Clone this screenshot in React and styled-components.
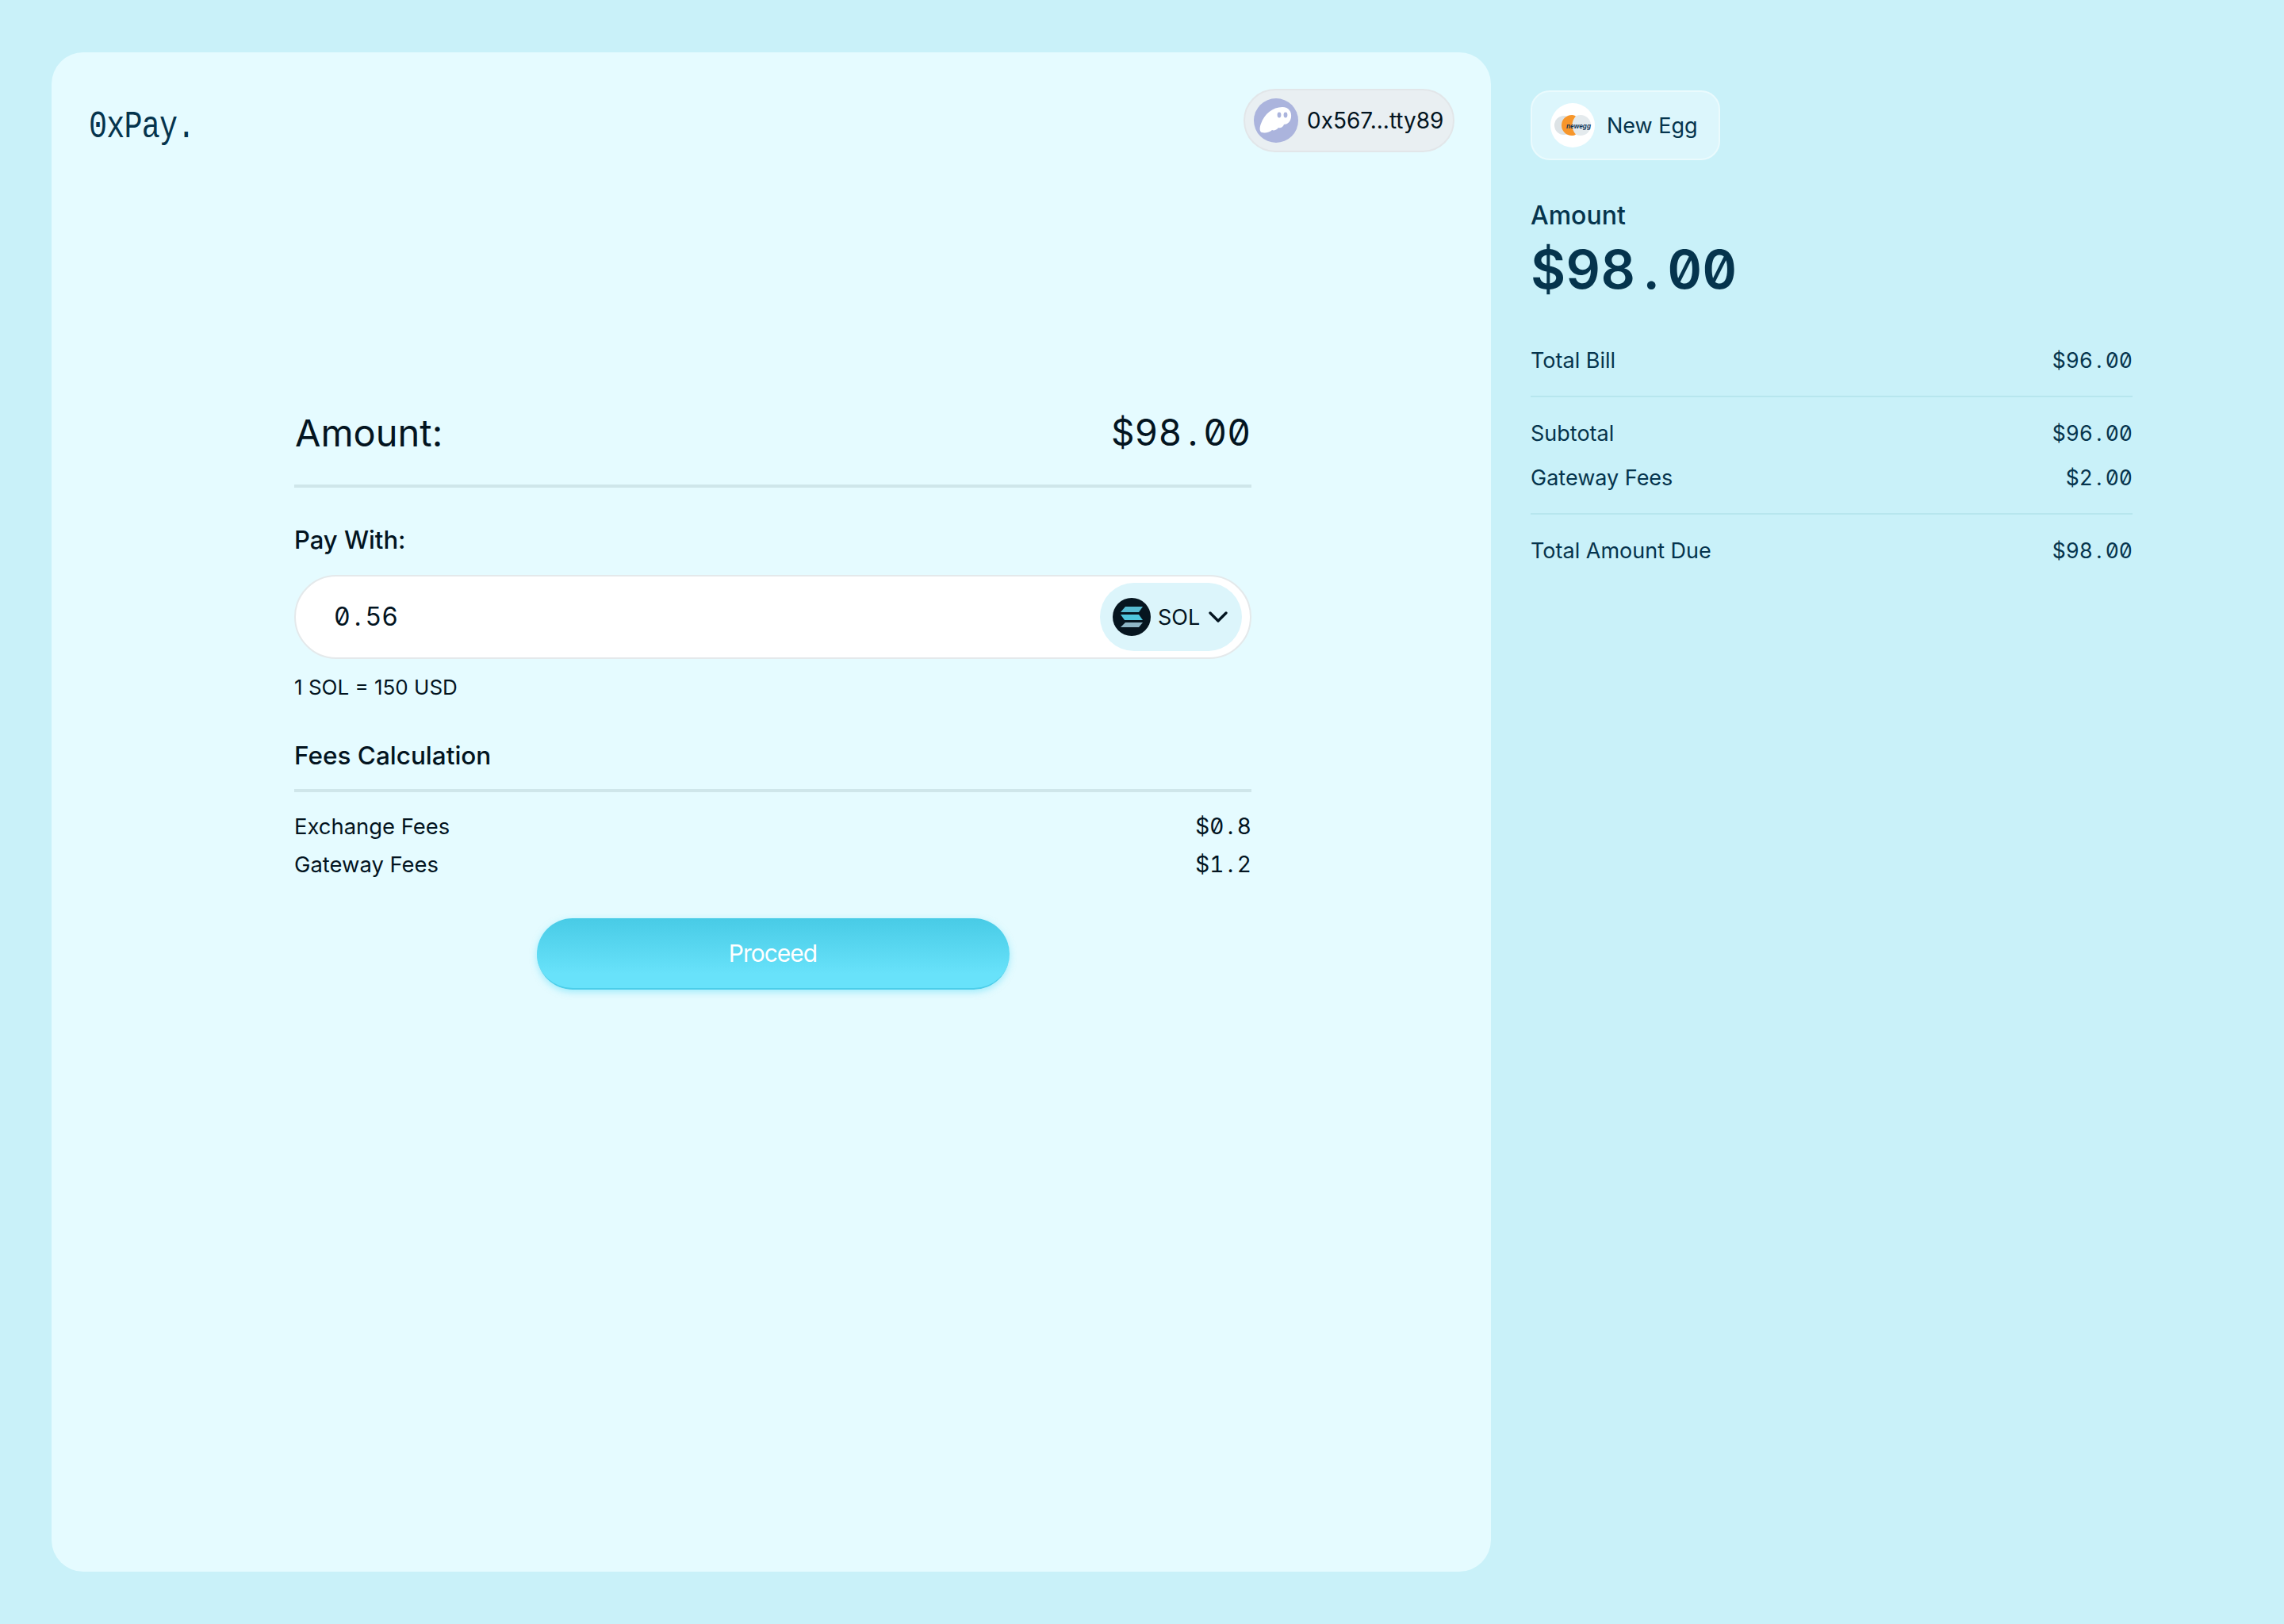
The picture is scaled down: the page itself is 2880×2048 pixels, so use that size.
import React from "react";
import styled, { createGlobalStyle } from "styled-components";
import { ChevronDown } from "lucide-react";

const GlobalStyle = createGlobalStyle`
  html, body {
    margin: 0;
    padding: 0;
    background: #c9f1f9;
    font-family: "Inter", "Open Sans", sans-serif;
  }
  * {
    box-sizing: border-box;
  }
`;

const Page = styled.div`
  display: flex;
  width: 2880px;
  height: 2048px;
  padding: 66px 0 66px 65px;
  background: #c9f1f9;
`;

const MainPanel = styled.main`
  width: 1815px;
  height: 1916px;
  padding: 46px 46px 0 47px;
  background: #e5fbff;
  border-radius: 40px;
`;

const TopBar = styled.header`
  display: flex;
  justify-content: space-between;
  align-items: flex-start;
`;

const Logo = styled.div`
  margin-top: 18px;
  font-family: "Liberation Mono", monospace;
  font-size: 48px;
  line-height: 60px;
  letter-spacing: -1px;
  color: #05344d;
  transform: scaleX(0.8);
  transform-origin: left center;
`;

const WalletPill = styled.div`
  display: flex;
  align-items: center;
  gap: 11px;
  width: 266px;
  height: 80px;
  padding: 0 11px;
  background: #e9eff2;
  border: 2px solid #e2e6e9;
  border-radius: 40px;
  font-size: 28px;
  white-space: nowrap;
  color: #03141f;
`;

const Avatar = styled.div`
  display: flex;
  flex: none;
  align-items: center;
  justify-content: center;
  width: 56px;
  height: 56px;
  border-radius: 50%;
  background: ${({ $bg }) => $bg};
`;

const Checkout = styled.section`
  width: 1207px;
  margin: 322px 0 0 259px;
  color: #03141f;
`;

const AmountRow = styled.div`
  display: flex;
  justify-content: space-between;
  align-items: center;
  height: 62px;
  padding: 0 1px 0 1px;
`;

const AmountLabel = styled.div`
  font-size: 47px;
`;

// slashed-zero tabular figures stand in for the mono face of the reference
const Figure = styled.span`
  font-family: "Inter", sans-serif;
  font-feature-settings: "zero", "tnum";
  font-size: ${({ $size }) => $size || 28}px;
  font-weight: ${({ $weight }) => $weight || 400};
  line-height: 1;
`;

const Dot = styled.span`
  padding: 0 0.16em;
`;

const Divider = styled.hr`
  margin: ${({ $margin }) => $margin};
  border: 0;
  height: ${({ $height }) => $height || 4}px;
  background: ${({ $color }) => $color || "#cfe6ea"};
`;

const FieldLabel = styled.div`
  margin-top: 44px;
  font-size: 31px;
  line-height: 44px;
  font-weight: 500;
`;

const InputShell = styled.div`
  display: flex;
  justify-content: space-between;
  align-items: center;
  height: 106px;
  margin-top: 22px;
  padding: 0 10px 0 48px;
  background: #fff;
  border: 2px solid #e4e9eb;
  border-radius: 53px;
`;

const TokenSelect = styled.div`
  display: flex;
  align-items: center;
  width: 179px;
  height: 86px;
  padding-left: 16px;
  background: #dcf5fb;
  border-radius: 43px;
  font-size: 27px;
`;

const TokenName = styled.span`
  margin: 0 3px 0 9px;
`;

const Rate = styled.div`
  margin-top: 18px;
  font-size: 26px;
  line-height: 36px;
`;

const SectionTitle = styled.div`
  margin-top: 46px;
  font-size: 31.5px;
  line-height: 44px;
  font-weight: 500;
`;

const FeeRow = styled.div`
  display: flex;
  justify-content: space-between;
  align-items: center;
  height: 48px;
  font-size: 27.4px;
`;

const ProceedButton = styled.button`
  display: block;
  width: 596px;
  height: 90px;
  margin: 44px auto 0;
  background: linear-gradient(180deg, #48cbe6 0%, #68e2fa 80%);
  border: 0;
  border-bottom: 2px solid #4ccde9;
  border-radius: 45px;
  box-shadow: 0 3px 8px rgba(90, 222, 248, 0.5);
  font-family: inherit;
  font-size: 30px;
  letter-spacing: -1px;
  color: #fff;
`;

const Summary = styled.aside`
  width: 759px;
  margin: 48px 0 0 50px;
  color: #05344d;
`;

const MerchantPill = styled.div`
  display: inline-flex;
  align-items: center;
  gap: 15px;
  width: 239px;
  height: 88px;
  padding: 0 23px;
  background: #dcf6fc;
  border: 2px solid #eafafd;
  border-radius: 24px;
  font-size: 27px;
  white-space: nowrap;
`;

const SummaryLabel = styled.div`
  margin-top: 48px;
  font-size: 32px;
  line-height: 44px;
  font-weight: 500;
`;

const SummaryTotal = styled.div`
  margin-top: 11px;
  line-height: 90px;
`;

const SummaryRows = styled.div`
  margin-top: 23px;
`;

const SummaryRow = styled.div`
  display: flex;
  justify-content: space-between;
  align-items: center;
  height: 56px;
  font-size: 27px;
`;

const GhostIcon = () => (
  <svg width="44" height="38" viewBox="0 0 44 38">
    <path
      d="M4 34c-3-1-3-6-1-11C7 11 18 2 30 2c8 0 12 6 11 13-1 6-5 9-9 9-1 3-4 5-7 4-2 3-6 4-8 3-3 3-9 4-13 3z"
      fill="#fff"
    />
    <ellipse cx="26" cy="12" rx="2.4" ry="3.4" fill="#abb4dd" />
    <ellipse cx="34" cy="12" rx="2.4" ry="3.4" fill="#abb4dd" />
  </svg>
);

const SolanaIcon = () => (
  <svg width="48" height="48" viewBox="0 0 48 48">
    <circle cx="24" cy="24" r="24" fill="#06151f" />
    <polygon points="16,11 38,11 33,18 10,18" fill="#58bcd2" />
    <polygon points="10,21 33,21 38,28 15,28" fill="#4fc6dc" />
    <polygon points="16,31 38,31 33,37 10,37" fill="#8eb6c6" />
  </svg>
);

const NeweggIcon = () => (
  <svg width="56" height="56" viewBox="0 0 56 56">
    <circle cx="17" cy="28" r="12" fill="#dde3e6" />
    <circle cx="38" cy="28" r="13" fill="#e4eaed" />
    <path d="M27 15a13 13 0 1 0 0 26 7 7 0 0 0 5-1.5 17 17 0 0 1 0-23A7 7 0 0 0 27 15z" fill="#f7962b" />
    <text
      x="20"
      y="31.5"
      fontFamily="Liberation Sans, sans-serif"
      fontSize="9"
      fontWeight="700"
      fontStyle="italic"
      textLength="31"
      lengthAdjust="spacingAndGlyphs"
      fill="#0f3556"
    >
      newegg
    </text>
  </svg>
);

// renders "$98.00" with the dot widened to the digit cell
const Money = ({ value, ...rest }) => {
  const [whole, cents] = value.split(".");
  return (
    <Figure {...rest}>
      {whole}
      <Dot>.</Dot>
      {cents}
    </Figure>
  );
};

const App = () => (
  <>
    <GlobalStyle />
    <Page>
      <MainPanel>
        <TopBar>
          <Logo>0xPay.</Logo>
          <WalletPill>
            <Avatar $bg="#abb4dd">
              <GhostIcon />
            </Avatar>
            0x567...tty89
          </WalletPill>
        </TopBar>

        <Checkout>
          <AmountRow>
            <AmountLabel>Amount:</AmountLabel>
            <Money value="$98.00" $size={46} />
          </AmountRow>
          <Divider $margin="35px 0 0" />
          <FieldLabel>Pay With:</FieldLabel>
          <InputShell>
            <Money value="0.56" $size={32} />
            <TokenSelect>
              <SolanaIcon />
              <TokenName>SOL</TokenName>
              <ChevronDown size={40} strokeWidth={2} />
            </TokenSelect>
          </InputShell>
          <Rate>1 SOL = 150 USD</Rate>
          <SectionTitle>Fees Calculation</SectionTitle>
          <Divider $margin="20px 0 19px" />
          <FeeRow>
            Exchange Fees
            <Money value="$0.8" />
          </FeeRow>
          <FeeRow>
            Gateway Fees
            <Money value="$1.2" />
          </FeeRow>
          <ProceedButton>Proceed</ProceedButton>
        </Checkout>
      </MainPanel>

      <Summary>
        <MerchantPill>
          <Avatar $bg="#fff">
            <NeweggIcon />
          </Avatar>
          New Egg
        </MerchantPill>
        <SummaryLabel>Amount</SummaryLabel>
        <SummaryTotal>
          <Money value="$98.00" $size={68} $weight={600} />
        </SummaryTotal>
        <SummaryRows>
          <SummaryRow>
            Total Bill
            <Money value="$96.00" $size={26.5} />
          </SummaryRow>
          <Divider $margin="17px 0" $height={2} $color="#b7e6ee" />
          <SummaryRow>
            Subtotal
            <Money value="$96.00" $size={26.5} />
          </SummaryRow>
          <SummaryRow>
            Gateway Fees
            <Money value="$2.00" $size={26.5} />
          </SummaryRow>
          <Divider $margin="17px 0" $height={2} $color="#b7e6ee" />
          <SummaryRow>
            Total Amount Due
            <Money value="$98.00" $size={26.5} />
          </SummaryRow>
        </SummaryRows>
      </Summary>
    </Page>
  </>
);

export default App;
